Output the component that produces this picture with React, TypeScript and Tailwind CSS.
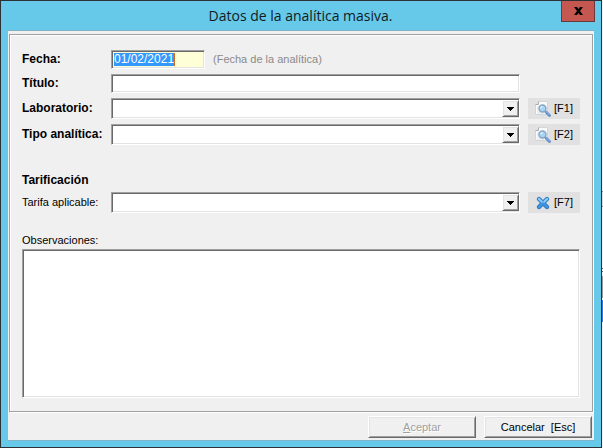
// Purpose: Dialog for entering the data of a bulk lab analysis.

import { type ReactNode } from "react";
import clsx from "clsx";

const sunken =
  "border border-t-[#a0a0a0] border-l-[#a0a0a0] border-r-white border-b-white shadow-[inset_1px_1px_#696969,inset_-1px_-1px_#e3e3e3]";
const raised =
  "border border-t-white border-l-white border-r-[#696969] border-b-[#696969] bg-[#f0f0f0] shadow-[inset_1px_1px_#e3e3e3,inset_-1px_-1px_#a0a0a0]";

function SearchIcon() {
  return (
    <svg className="h-4 w-4" viewBox="0 0 16 16" aria-hidden="true">
      <path d="M3.500.5H12.500v13H.5v-10z" fill="#fafafa" stroke="#d3d6d9" />
      <path d="M.5 3.500h3v-3" fill="#e3e5e7" stroke="#a9aeb3" />
      <path d="M2 6h3M2 8h2M2 10h3M2 12h7" stroke="#dcdfe2" />
      <path d="m11 11 3.500 3.500" stroke="#5b8bc9" strokeWidth="2.800" strokeLinecap="round" />
      <path d="m11 10.500 3.500 3.500" stroke="#9cc0ea" strokeWidth="1" strokeLinecap="round" />
      <circle cx="7.500" cy="7.500" r="3.500" fill="#a4d5f2" stroke="#8aa3c4" strokeWidth="1.400" />
      <path d="M5.800 7.500a1.800 1.800 0 0 1 1.800-1.800" fill="none" stroke="#e4f5fd" strokeWidth="1.200" />
    </svg>
  );
}

function ClearIcon() {
  return (
    <svg className="h-4 w-4" viewBox="0 0 16 16" aria-hidden="true">
      <path d="m4 4 8 8M12 4l-8 8" stroke="#2a72bd" strokeWidth="4.400" strokeLinecap="round" />
      <path d="m4 4 8 8M12 4l-8 8" stroke="#3f94e0" strokeWidth="2.800" strokeLinecap="round" />
      <path d="m3.800 3.800 3 3M12.200 3.800l-3 3" stroke="#8ccaf7" strokeWidth="2" strokeLinecap="round" />
    </svg>
  );
}

function Row({ id, label, bold = true, children }: { id: string; label: string; bold?: boolean; children: ReactNode }) {
  return (
    <div className="grid grid-cols-[89px_minmax(0,1fr)_52px] items-center">
      <label htmlFor={id} className={clsx("whitespace-nowrap", bold && "text-[12px] font-bold")}>
        {label}
      </label>
      {children}
    </div>
  );
}

function Combo({ id }: { id: string }) {
  return (
    <div className={clsx("mr-2 grid h-[21px] bg-white py-px pl-px", sunken)}>
      <select id={id} className="col-start-1 row-start-1 w-full appearance-none px-1 outline-none" defaultValue="">
        <option value=""></option>
      </select>
      <span
        aria-hidden="true"
        className={clsx("pointer-events-none col-start-1 row-start-1 flex w-[17px] items-center justify-center justify-self-end", raised)}
      >
        <svg className="h-1 w-[7px]" viewBox="0 0 7 4" shapeRendering="crispEdges">
          <path d="M0 0h7v1H6v1H5v1H4v1H3V3H2V2H1V1H0z" />
        </svg>
      </span>
    </div>
  );
}

function KeyButton({ icon, shortcut, title }: { icon: ReactNode; shortcut: string; title: string }) {
  return (
    <button type="button" title={title} className="flex h-[21px] items-center gap-[3px] bg-[#e1e1e1] pl-[7px]">
      {icon}
      {shortcut}
    </button>
  );
}

export default function App() {
  return (
    <div className="flex min-h-screen bg-[#f0f0f0] font-['Liberation_Sans',Arial,sans-serif] text-[11px] leading-[13px] text-black">
      <div className="flex min-w-0 flex-1 flex-col border border-[#2d3035] bg-[#66c9ea] px-[7px] pb-[6px]">
        <header className="flex h-[29px] items-start">
          <h1 className="flex-1 pt-[5px] pl-8 text-center font-['Open_Sans','Noto_Sans',sans-serif] text-[14px] leading-5 text-[#101c22]">
            Datos de la analítica masiva.
          </h1>
          <button
            type="button"
            aria-label="Cerrar"
            className="-mr-px flex h-[21px] w-[34px] items-center justify-center border border-t-0 border-[#6b3a3c] bg-[#c4574f]"
          >
            <svg className="h-2 w-[9px]" viewBox="0 0 9 8" aria-hidden="true">
              <path d="M0 0h3l1.500 2L6 0h3L6 4l3 4H6L4.500 6 3 8H0l3-4z" />
            </svg>
          </button>
        </header>

        <form className="flex flex-1 flex-col border-y border-[#83b3c8] bg-[#f0f0f0]">
          <div className="mx-px mt-[3px] flex flex-1 flex-col border border-[#a0a0a0] shadow-[inset_1px_1px_#fff,1px_1px_#fff]">
            <div className="flex flex-1 flex-col px-3 pt-[15px] pb-[13px]">
              <div className="flex flex-col gap-[5px]">
                <Row id="fecha" label="Fecha:">
                  <div className="flex items-center gap-2">
                    <div className={clsx("flex h-[19px] w-[94px] bg-[#ffffd7] p-[2px]", sunken)}>
                      <input
                        id="fecha"
                        autoFocus
                        onFocus={(event) => event.currentTarget.select()}
                        defaultValue="01/02/2021"
                        className="field-sizing-content border-r border-[#d06a20] text-[12px] outline-none selection:bg-[#3399ff] selection:text-white"
                      />
                    </div>
                    <span className="text-[#8a8a8a]">(Fecha de la analítica)</span>
                  </div>
                </Row>
                <Row id="titulo" label="Título:">
                  <input id="titulo" className={clsx("mr-2 h-[19px] bg-white px-1 outline-none", sunken)} />
                </Row>
                <Row id="laboratorio" label="Laboratorio:">
                  <Combo id="laboratorio" />
                  <KeyButton icon={<SearchIcon />} shortcut="[F1]" title="Buscar laboratorio" />
                </Row>
                <Row id="tipo" label="Tipo analítica:">
                  <Combo id="tipo" />
                  <KeyButton icon={<SearchIcon />} shortcut="[F2]" title="Buscar tipo de analítica" />
                </Row>
              </div>

              <h2 className="mt-[29px] mb-[5px] text-[12px] leading-[13px] font-bold">Tarificación</h2>
              <Row id="tarifa" label="Tarifa aplicable:" bold={false}>
                <Combo id="tarifa" />
                <KeyButton icon={<ClearIcon />} shortcut="[F7]" title="Quitar tarifa" />
              </Row>

              <label htmlFor="observaciones" className="mt-[21px] mb-[2px]">
                Observaciones:
              </label>
              <textarea id="observaciones" className={clsx("min-h-20 flex-1 resize-none bg-white p-1 outline-none", sunken)} />
            </div>
          </div>

          <footer className="flex justify-end gap-2 pt-1 pr-[2px] pb-[2px]">
            <button type="submit" disabled className={clsx("h-[22px] w-[108px] text-[#a0a0a0] [text-shadow:1px_1px_0_#fff]", raised)}>
              <span className="underline">A</span>ceptar
            </button>
            <button type="button" className={clsx("h-[22px] w-[108px] whitespace-pre", raised)}>
              {"Cancelar  [Esc]"}
            </button>
          </footer>
        </form>
      </div>

      {/* Sliver of the window behind the dialog */}
      <div className="flex w-px flex-col" aria-hidden="true">
        <div className="h-[191px]" />
        <div className="h-4 border-y border-[#8a8a8a] bg-[#dcdcdc]" />
        <div className="h-[61px]" />
        <div className="h-1 border-y border-[#696969]" />
        <div className="mt-1 h-[22px] bg-[#9a9a9a]" />
        <div className="mt-[2px] h-[22px] bg-[#2a7de0]" />
      </div>
    </div>
  );
}
